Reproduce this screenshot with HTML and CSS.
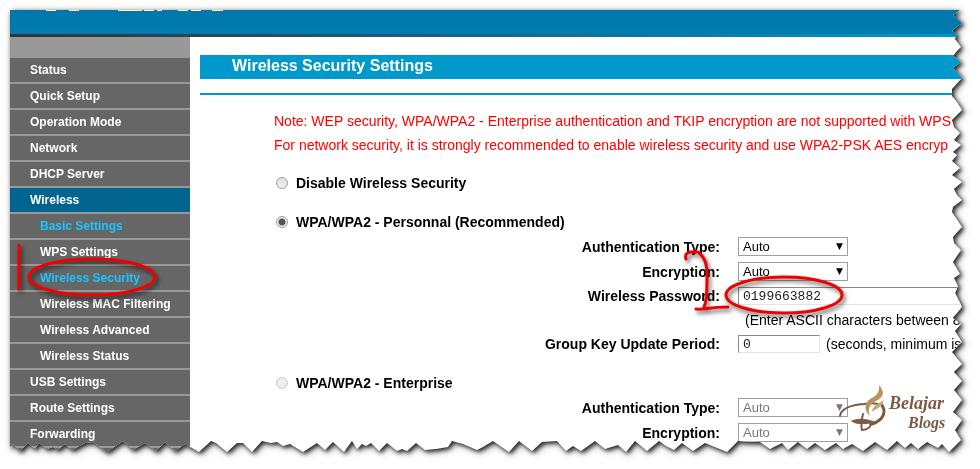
FILE: index.html
```html
<!DOCTYPE html>
<html lang="en">
<head>
  <meta charset="UTF-8" />
  <meta name="viewport" content="width=device-width, initial-scale=1.0"/>
  <title>Wireless Security Settings</title>
  <link rel="stylesheet" href="styles.css">
</head>
<body>
  <div class="shadow">
    <div class="page" id="page">
      <header class="header">
        <svg class="header-logo" viewBox="0 0 180 1" width="180" height="1">
          <path d="M0 0h10v1H0zM23 0h10v1H23zM72 0h24v1H72zM98 0h10v1H98zM111 0h5v1h-5zM132 0h10v1h-10zM145 0h10v1h-10zM166 0h11v1h-11z" fill="#fff"/>
        </svg>
      </header>

      <div class="columns">
        <nav class="menu">
          <ul>
            <li><a href="#">Status</a></li>
            <li><a href="#">Quick Setup</a></li>
            <li><a href="#">Operation Mode</a></li>
            <li><a href="#">Network</a></li>
            <li><a href="#">DHCP Server</a></li>
            <li class="active"><a href="#">Wireless</a></li>
            <li class="sub current"><a href="#">Basic Settings</a></li>
            <li class="sub"><a href="#">WPS Settings</a></li>
            <li class="sub current marked">
              <a href="#">Wireless Security</a>
              <svg class="mark mark-menu" viewBox="0 0 164 60" width="164" height="60">
                <path d="M9 10v44"/>
                <ellipse cx="82" cy="42" rx="63" ry="18"/>
              </svg>
            </li>
            <li class="sub"><a href="#">Wireless MAC Filtering</a></li>
            <li class="sub"><a href="#">Wireless Advanced</a></li>
            <li class="sub"><a href="#">Wireless Status</a></li>
            <li><a href="#">USB Settings</a></li>
            <li><a href="#">Route Settings</a></li>
            <li><a href="#">Forwarding</a></li>
          </ul>
        </nav>

        <main class="content">
          <h1>Wireless Security Settings</h1>

          <form class="settings">
            <p class="note">Note: WEP security, WPA/WPA2 - Enterprise authentication and TKIP encryption are not supported with WPS<br>
            For network security, it is strongly recommended to enable wireless security and use WPA2-PSK AES encryp</p>

            <div class="option">
              <input type="radio" name="security" id="disable">
              <label for="disable">Disable Wireless Security</label>
            </div>

            <div class="option">
              <input type="radio" name="security" id="personal" checked>
              <label for="personal">WPA/WPA2 - Personnal (Recommended)</label>
            </div>

            <div class="row">
              <label for="auth">Authentication Type:</label>
              <span class="select"><select id="auth"><option>Auto</option></select></span>
            </div>
            <div class="row">
              <label for="encryption">Encryption:</label>
              <span class="select"><select id="encryption"><option>Auto</option></select></span>
            </div>
            <div class="row text marked">
              <label for="password">Wireless Password:</label>
              <input type="text" id="password" value="0199663882">
              <svg class="mark mark-password" viewBox="0 0 170 80" width="170" height="80">
                <path d="M6 18C4 12 9 10 18 11C28 18 27 30 27 40C27 50 27 60 24 66M16 68C24 69 28 66 48 66"/>
                <ellipse cx="104" cy="54" rx="58" ry="18"/>
              </svg>
            </div>
            <div class="row text">
              <span></span>
              <span class="hint">(Enter ASCII characters between 8</span>
            </div>
            <div class="row text">
              <label for="period">Group Key Update Period:</label>
              <span class="field"><input type="text" id="period" value="0"> (seconds, minimum is</span>
            </div>

            <div class="option">
              <input type="radio" name="security" id="enterprise" disabled>
              <label for="enterprise">WPA/WPA2 - Enterprise</label>
            </div>

            <div class="row">
              <label for="auth2">Authentication Type:</label>
              <span class="select"><select id="auth2" disabled><option>Auto</option></select></span>
            </div>
            <div class="row">
              <label for="encryption2">Encryption:</label>
              <span class="select"><select id="encryption2" disabled><option>Auto</option></select></span>
            </div>
          </form>
        </main>
      </div>

      <svg class="watermark" viewBox="0 0 116 60" width="116" height="60">
        <g fill="none" stroke="#7b5a43" stroke-linecap="round">
          <path d="M4 36C5 28 15 25 28 24C34 23 40 23 45 25" stroke-width="2"/>
          <path d="M45 24C51 31 48 40 36 44" stroke-width="3"/>
          <path d="M16 41C22 38 31 39 38 42C31 44 20 45 16 41Z" fill="#7b5a43" stroke-width="1"/>
          <path d="M27 34C25 42 25 47 26 50C32 50 36 46 34 43" stroke-width="2"/>
        </g>
        <path d="M43 5C44 13 40 16 34 19C28 23 28 31 34 36C31 29 34 24 40 21C48 17 49 12 43 5Z" fill="#b8935f"/>
        <path d="M48 17C48 24 37 22 36 32C40 28 47 29 48 17Z" fill="#c9a878"/>
        <text x="53" y="29" font-size="18">Belajar</text>
        <text x="72" y="48" font-size="16">Blogs</text>
      </svg>
    </div>
  </div>

  <script>
    // torn paper edge: [position along the edge, depth of the cut]
    const right = [
      [0,2],[5,9],[13,0],[21,10],[24,5],[29,7],[37,1],[41,5],[46,9],[52,1],[58,9],[68,0],[79,10],[86,10],
      [92,5],[100,0],[110,10],[117,8],[123,2],[130,8],[135,1],[142,9],[145,5],[151,10],[158,2],[165,10],
      [172,0],[179,8],[185,5],[190,0],[197,9],[202,10],[208,6],[217,0],[227,9],[233,8],[240,1],[252,9],
      [264,2],[268,8],[276,4],[283,7],[297,0],[308,9],[314,1],[321,7],[332,0],[342,10],[354,0],[362,8],
      [371,0],[380,8],[390,0],[402,9],[410,0],[420,7],[430,1]
    ];
    const bottom = [
      [0,4],[3,8],[10,1],[18,9],[25,3],[29,9],[37,3],[43,5],[48,2],[55,8],[62,2],[75,9],[83,10],[97,0],
      [113,11],[123,2],[135,9],[146,1],[155,10],[165,1],[175,8],[189,0],[201,11],[206,9],[217,0],[227,9],
      [233,9],[242,0],[252,11],[261,9],[267,10],[273,6],[280,8],[293,0],[307,9],[315,2],[323,10],[334,0],
      [342,11],[347,3],[352,8],[356,6],[361,9],[369,1],[377,9],[387,1],[392,3],[397,1],[406,9],[415,2],
      [426,3],[438,5],[442,11],[453,8],[467,2],[473,5],[483,11],[499,0],[509,11],[522,1],[532,10],[547,11],
      [556,1],[563,6],[571,1],[585,11],[595,3],[608,7],[616,0],[625,11],[637,1],[649,11],[656,6],[664,2],
      [672,9],[683,1],[695,9],[717,0],[728,11],[750,10],[760,3],[772,9],[778,2],[788,10],[797,3],[805,9],
      [815,2],[826,9],[833,3],[842,8],[853,1],[865,10],[877,2],[887,11],[895,4],[901,9],[908,3],[917,10],
      [928,4],[932,8],[939,0]
    ];
    const page = document.getElementById("page");

    function tearEdges() {
      const w = page.clientWidth;
      const h = page.clientHeight;
      const points = ["0 0"];

      for (let base = 0; base < h - 12; base += 430) {
        right.forEach(([y, depth]) => {
          if (base + y <= h - 12) points.push(`${w - depth}px ${base + y}px`);
        });
      }

      const edge = [];
      for (let base = 0; base < w - 12; base += 940) {
        bottom.forEach(([x, depth]) => {
          if (base + x <= w - 12) edge.push(`${base + x}px ${h - depth}px`);
        });
      }
      points.push(...edge.reverse());
      page.style.clipPath = `polygon(${points.join(",")})`;
    }

    tearEdges();
    window.addEventListener("resize", tearEdges);
  </script>
</body>
</html>
```
FILE: styles.css
```css
* {
  box-sizing: border-box;
}

body {
  margin: 0;
  background: #fff;
  font-family: "Liberation Sans", Arial, sans-serif;
  font-size: 14px;
  color: #000;
  overflow: hidden;
}

.shadow {
  padding: 10px 18px 17px 10px;
  filter: drop-shadow(2px 2px 2px rgba(0,0,0,0.8)) drop-shadow(1px 1px 3px rgba(0,0,0,0.35));
}

.page {
  position: relative;
  height: calc(100vh - 27px);
  overflow: hidden;
  background: #fff;
}

.header {
  height: 27px;
  padding-left: 36px;
  background:
    linear-gradient(to right, #333, #0099cc) bottom / 100% 3px no-repeat,
    linear-gradient(#0077a8, #007db3);
}

.header-logo {
  display: block;
}

.columns {
  display: flex;
}

.menu {
  width: 180px;
  flex-shrink: 0;
  padding-top: 21px;
  background: #999;
  font-size: 12px;
  font-weight: bold;
}

.menu ul {
  margin: 0;
  padding: 0;
  list-style: none;
}

.menu ul::after {
  content: "";
  display: block;
  height: 24px;
  background: #666;
}

.menu li {
  margin-bottom: 2px;
  background: #666;
}

.menu a {
  display: block;
  padding-left: 20px;
  line-height: 24px;
  color: #fff;
  text-decoration: none;
}

.menu .active {
  background: #00648f;
}

.menu .sub a {
  padding-left: 30px;
}

.menu .current a {
  color: #1cc3ff;
}

.marked {
  position: relative;
}

.mark {
  position: absolute;
  z-index: 1;
  overflow: visible;
  fill: none;
  stroke: #f00000;
  stroke-width: 3;
  stroke-linecap: round;
  pointer-events: none;
  filter: drop-shadow(2px 3px 2px rgba(0,0,0,0.6));
}

.mark-menu {
  left: 0;
  bottom: -5px;
}

.content {
  flex: 1;
  min-width: 0;
  padding: 18px 0 0 10px;
}

h1 {
  margin: 0 0 14px;
  padding: 0 0 2px 32px;
  background: #0099cc;
  color: #fff;
  font-size: 16px;
  line-height: 22px;
}

.settings {
  padding-top: 14px;
  border-top: 2px solid #0099cc;
  white-space: nowrap;
}

.note {
  margin: 0;
  padding-left: 74px;
  line-height: 24px;
  color: #f00;
}

.option {
  display: flex;
  align-items: center;
  gap: 8px;
  height: 24px;
  margin-top: 15px;
  padding-left: 76px;
  font-weight: bold;
}

.note + .option {
  margin-top: 14px;
}

input[type="radio"] {
  appearance: none;
  width: 12px;
  height: 12px;
  margin: 0;
  border: 1px solid #a0a0a0;
  border-radius: 50%;
  background: linear-gradient(#e0e0e0, #f0f0f0);
}

input[type="radio"]:checked {
  background: radial-gradient(circle, #555 0 3px, #eee 4px);
}

input[type="radio"]:disabled {
  border-color: #ccc;
  background: #eee;
}

.row {
  display: grid;
  grid-template-columns: 520px 1fr;
  column-gap: 18px;
  align-items: center;
  height: 25px;
}

.row.text {
  height: 24px;
}

.row label {
  font-weight: bold;
  text-align: right;
}

.select {
  position: relative;
  width: 110px;
}

.select::after {
  content: "▼";
  position: absolute;
  right: 5px;
  top: 0;
  font: 9px/18px "DejaVu Sans", sans-serif;
  pointer-events: none;
}

.select:has(:disabled)::after {
  color: #777;
}

select {
  appearance: none;
  display: block;
  width: 100%;
  height: 19px;
  padding: 0 4px;
  border: 1px solid #a0a0a0;
  border-radius: 0;
  background: #fff;
  color: #000;
  font: 13px "Liberation Sans", Arial, sans-serif;
}

select:disabled {
  color: #777;
  opacity: 1;
}

input[type="text"] {
  height: 18px;
  padding: 0 4px;
  border: 1px solid;
  border-color: #888 #e4e4e4 #e4e4e4 #888;
  background: #fff;
  color: #222;
  font: 13px "Liberation Mono", "Courier New", monospace;
}

#password {
  width: 260px;
}

.field {
  display: flex;
  align-items: center;
  gap: 6px;
}

#period {
  width: 82px;
}

.hint {
  padding-left: 7px;
}

.mark-password {
  left: 480px;
  top: -43px;
}

.watermark {
  position: absolute;
  right: 10px;
  bottom: 12px;
  fill: #7b5a43;
  font-family: "Liberation Serif", serif;
  font-style: italic;
  font-weight: bold;
}
```
